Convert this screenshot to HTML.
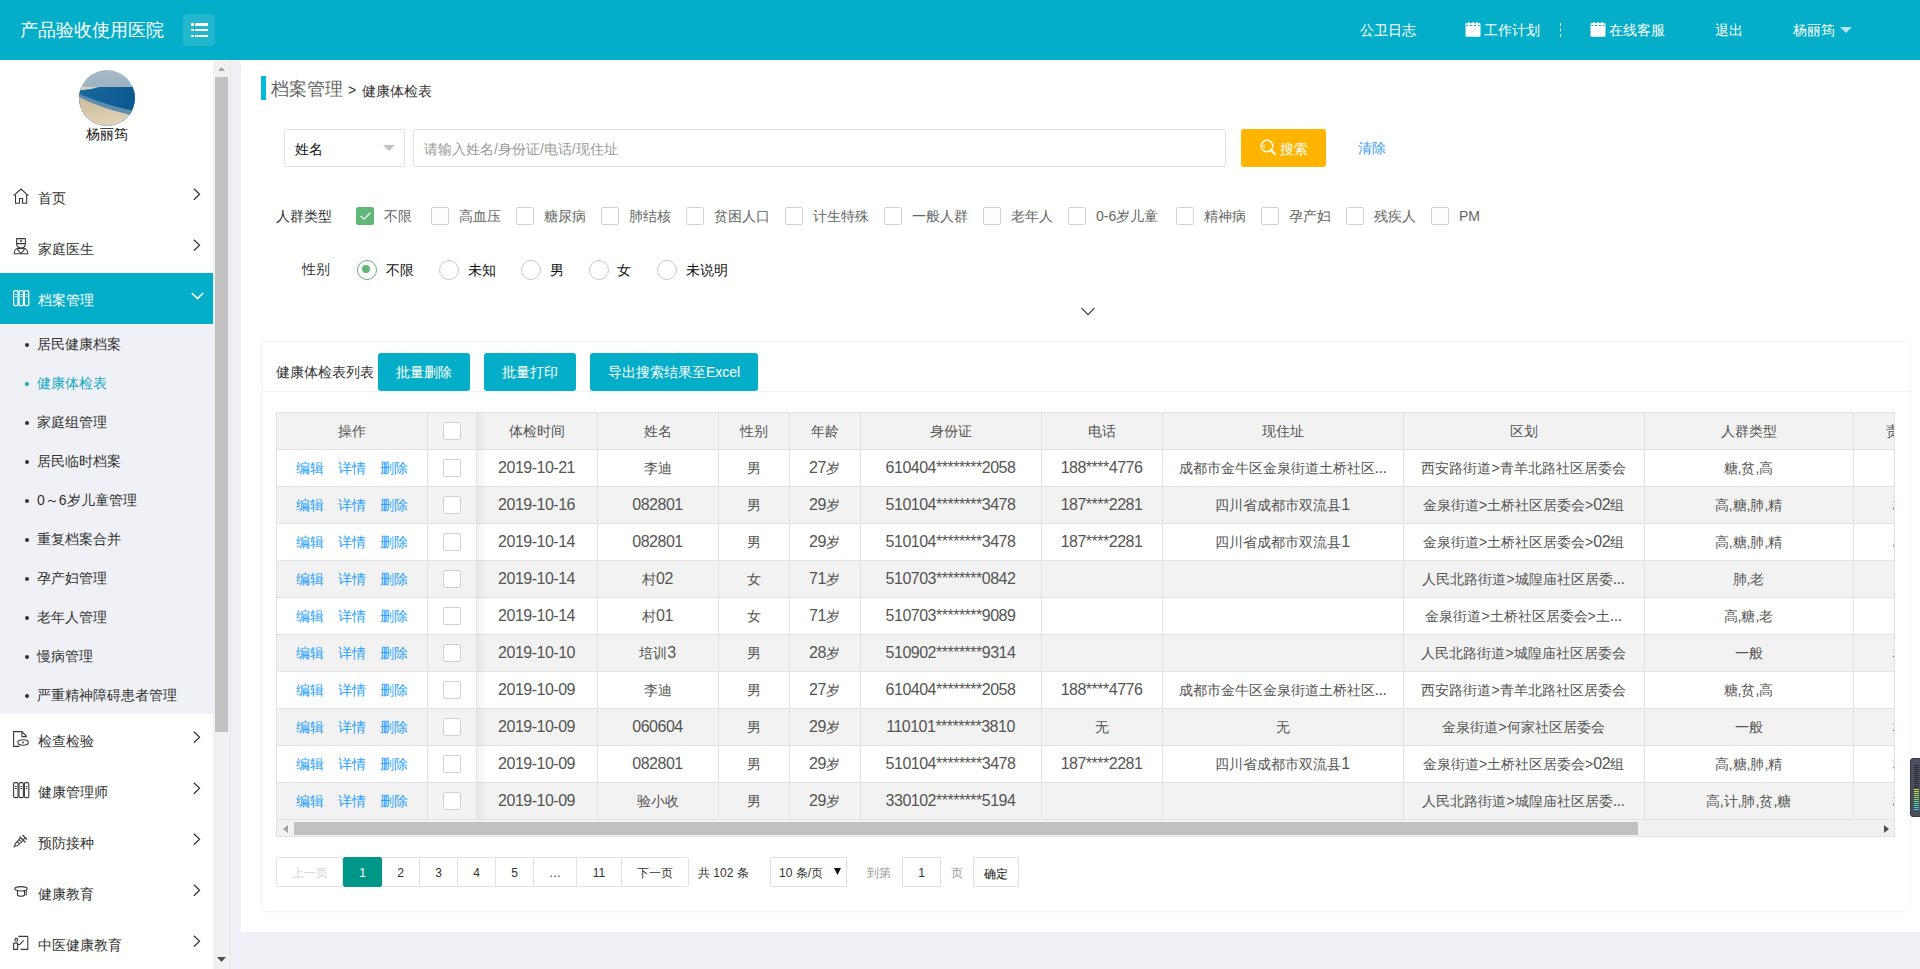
<!DOCTYPE html>
<html lang="zh">
<head>
<meta charset="utf-8">
<title>健康体检表</title>
<style>
*{box-sizing:border-box;margin:0;padding:0}
html,body{width:1920px;height:969px;overflow:hidden;background:#f0f1f6;font-family:"Liberation Sans",sans-serif;font-size:14px;color:#333}
.abs{position:absolute;white-space:nowrap}
#header{position:absolute;left:0;top:0;width:1920px;height:60px;background:#05aec8}
.logo{position:absolute;left:20px;top:18px;font-size:18px;line-height:24px;color:#fff;white-space:nowrap}
.menubtn{position:absolute;left:183px;top:14px;width:32px;height:32px;border-radius:4px;background:rgba(255,255,255,.12)}
.menubtn i{position:absolute;height:2.4px;background:#fff}
.nav{position:absolute;top:20px;line-height:20px;color:#fff;font-size:14px;white-space:nowrap}
/* sidebar */
#side{position:absolute;left:0;top:60px;width:213px;height:909px;background:#fff;overflow:hidden}
.avatar{position:absolute;left:79px;top:10px;width:56px;height:56px;border-radius:50%;overflow:hidden}
.uname{position:absolute;left:0;width:213px;top:65px;text-align:center;line-height:18px;font-size:14px;color:#111}
.mi{position:absolute;left:0;width:213px;height:51px}
.mi .t{position:absolute;left:38px;top:17px;line-height:20px;color:#333;white-space:nowrap}
.mi svg.ic{position:absolute;left:13px;top:17px}
.mi svg.ch{position:absolute;left:192px;top:17px}
.mi.active{background:#05aec8}
.mi.active .t{color:#fff}
.sub{position:absolute;left:0;top:264px;width:213px;height:390px;background:#f0f1f6}
.si{position:absolute;left:0;width:213px;height:39px}
.si .t{position:absolute;left:37px;top:10px;line-height:20px;color:#333;white-space:nowrap}
.si b{position:absolute;left:25px;top:19px;width:4px;height:4px;border-radius:50%;background:#333}
.si.cur .t{color:#13a9c5}
.si.cur b{background:#13a9c5}
/* sidebar scrollbar */
#vsb{position:absolute;left:213px;top:60px;width:17px;height:909px;background:#f1f1f1}
#vsb .thumb{position:absolute;left:2px;top:17px;width:13px;height:655px;background:#c1c1c1}
#vsbline{position:absolute;left:230px;top:60px;width:1px;height:909px;background:#e6e6e6}
/* main */
#main{position:absolute;left:241px;top:60px;width:1679px;height:872px;background:#fff}
.card{position:absolute;left:261px;top:341px;width:1650px;height:571px;border:1px solid #f5f5f5;border-radius:4px;background:#fff;box-shadow:0 1px 1px rgba(0,0,0,.02)}
.cardline{position:absolute;left:262px;top:391px;width:1648px;height:1px;background:#f2f2f2}
.chk{position:absolute;width:18px;height:18px;border:1px solid #d2d2d2;border-radius:2px;background:#fff}
.chk.on{background:#5fb878;border-color:#5fb878}
.clbl{position:absolute;line-height:20px;margin-top:1px;color:#666;white-space:nowrap}
.radio{position:absolute;width:20px;height:20px;border:1.8px solid #c9c9c9;border-radius:50%}
.radio.on{border-color:#5fb878}
.radio.on:after{content:"";position:absolute;left:4.2px;top:4.2px;width:8px;height:8px;border-radius:50%;background:#5fb878}
.rlbl{position:absolute;line-height:20px;color:#111;white-space:nowrap;margin-top:1px}
.btn{position:absolute;height:38px;border-radius:3px;background:#05aec8;color:#fff;text-align:center;line-height:39px;font-size:14px;white-space:nowrap}
/* table */
.tbox{position:absolute;left:276px;top:412px;width:1619px;height:425px;border:1px solid #e2e2e2;overflow:hidden}
.trow{position:absolute;left:277px;width:1617px}
.trow.hd{background:#f2f2f2}
.trow.odd{background:#fff}
.trow.even{background:#f2f2f2}
.hl{position:absolute;left:277px;width:1617px;height:1px;background:#e2e2e2}
.d{font-size:16px;letter-spacing:-0.5px}
.cell{position:absolute;height:36px;line-height:36px;text-align:center;color:#555;white-space:nowrap;overflow:hidden}
.cell.th{color:#555}
.vl{position:absolute;width:1px;background:#e2e2e2}
.cb{position:absolute;width:18px;height:18px;border:1px solid #d2d2d2;border-radius:2px;background:#fff}
.ops span{position:absolute;line-height:36px;color:#1e9fff;white-space:nowrap}
.ops{position:absolute;left:0;height:37px}
.shadow{position:absolute;width:10px;background:linear-gradient(to right,rgba(0,0,0,.05),rgba(0,0,0,0))}
#hsb{position:absolute;left:277px;top:820px;width:1617px;height:16px;background:#f1f1f1}
#hsb .thumb{position:absolute;left:17px;top:2px;width:1344px;height:13px;background:#c1c1c1}
/* pagination */
.pg{position:absolute;top:857px;height:30px;border:1px solid #e2e2e2;line-height:30px;text-align:center;font-size:12px;color:#333;background:#fff;white-space:nowrap}
.pgt{position:absolute;top:863px;line-height:20px;font-size:12px;color:#333;white-space:nowrap}
</style>
</head>
<body>
<div id="header">
  <div class="logo">产品验收使用医院</div>
  <div class="menubtn">
    <i style="left:8px;top:9.2px;width:3px"></i><i style="left:12px;top:9.2px;width:13px"></i>
    <i style="left:8px;top:15px;width:3px"></i><i style="left:12px;top:15px;width:13px"></i>
    <i style="left:8px;top:20.8px;width:3px"></i><i style="left:12px;top:20.8px;width:13px"></i>
  </div>
  <div class="nav" style="left:1360px">公卫日志</div>
  <svg class="abs" style="left:1465px;top:22px" width="16" height="16" viewBox="0 0 16 16"><rect x="0.5" y="1" width="15" height="13.8" rx="1" fill="#fff"/><circle cx="4" cy="1" r="0.9" fill="#fff"/><circle cx="8" cy="1" r="0.9" fill="#fff"/><circle cx="12" cy="1" r="0.9" fill="#fff"/><path d="M1.3 3.5H3.2M4.8 3.5H7.2M8.8 3.5H11.2M12.8 3.5H14.5" stroke="#05aec8" stroke-width="1.1"/><path d="M5 8.6l1.8 1.8 3.2-3.4" stroke="#a9dfe9" stroke-width="0.8" fill="none"/></svg>
  <div class="nav" style="left:1484px">工作计划</div>
  <div class="abs" style="left:1560px;top:23px;width:1px;height:14px;border-left:1px dashed #fff"></div>
  <svg class="abs" style="left:1590px;top:22px" width="16" height="16" viewBox="0 0 16 16"><rect x="0.5" y="1" width="15" height="13.8" rx="1" fill="#fff"/><circle cx="4" cy="1" r="0.9" fill="#fff"/><circle cx="8" cy="1" r="0.9" fill="#fff"/><circle cx="12" cy="1" r="0.9" fill="#fff"/><path d="M1.3 3.5H3.2M4.8 3.5H7.2M8.8 3.5H11.2M12.8 3.5H14.5" stroke="#05aec8" stroke-width="1.1"/><path d="M5 8.6l1.8 1.8 3.2-3.4" stroke="#a9dfe9" stroke-width="0.8" fill="none"/></svg>
  <div class="nav" style="left:1609px">在线客服</div>
  <div class="nav" style="left:1715px">退出</div>
  <div class="nav" style="left:1793px">杨丽筠</div>
  <svg class="abs" style="left:1840px;top:27px" width="12" height="6" viewBox="0 0 12 6"><path d="M0 0h12L6 6z" fill="#b5e6ee"/></svg>
</div>

<div id="side">
  <div class="avatar">
    <svg width="56" height="56" viewBox="0 0 56 56">
      <defs><linearGradient id="sky" x1="0" y1="0" x2="0" y2="1"><stop offset="0" stop-color="#a6bac8"/><stop offset="1" stop-color="#8ba4b6"/></linearGradient>
      <linearGradient id="sea" x1="0" y1="0" x2="1" y2="0.3"><stop offset="0" stop-color="#1a6a9e"/><stop offset="1" stop-color="#0b5890"/></linearGradient>
      <linearGradient id="sand" x1="0" y1="0" x2="0.3" y2="1"><stop offset="0" stop-color="#cdbb9b"/><stop offset="1" stop-color="#e0d2b8"/></linearGradient></defs>
      <rect width="56" height="56" fill="url(#sky)"/>
      <rect y="17" width="56" height="39" fill="url(#sea)"/>
      <path d="M0 16.5 L20 17.3 L12 19 L0 20.5 Z" fill="#d9d0c0"/>
      <path d="M0 24 C16 30 34 37 56 41 L56 47 C34 43 16 36 0 27.5 Z" fill="#5c8cae"/>
      <path d="M0 27 C16 35 34 41 56 46 L56 56 L0 56 Z" fill="url(#sand)"/>
    </svg>
  </div>
  <div class="uname">杨丽筠</div>

  <div class="mi" style="top:111px">
    <svg class="ic" style="top:17px" width="17" height="17" viewBox="0 0 17 17" fill="none" stroke="#3a3a3a" stroke-width="1.1"><path d="M0.6 7.6 L8 1 L15.4 7.6 M2.5 7 V15.2 H6.5 V10.5 H9.6 V15.2 H13.6 V7"/></svg>
    <div class="t">首页</div>
    <svg class="ch" width="9" height="13" viewBox="0 0 9 13"><path d="M1.8 0.8 L7.6 6.3 L1.8 11.8" fill="none" stroke="#333" stroke-width="1.2"/></svg>
  </div>
  <div class="mi" style="top:162px">
    <svg class="ic" style="top:16px" width="17" height="17" viewBox="0 0 17 17" fill="none" stroke="#3a3a3a" stroke-width="1.1"><path d="M3.6 5.6 V1 Q3.6 0.6 4.2 0.6 H11.8 Q12.4 0.6 12.4 1 V5.6 Z M3.6 5.6 C3.6 8.6 5.6 10 8 10 C10.4 10 12.4 8.6 12.4 5.6 M1.2 15.8 C1.2 12.2 3.2 10.4 5 10.4 H11 C12.8 10.4 14.8 12.2 14.8 15.8 Z M4.6 10.6 C4.8 13.2 8 15.2 8 15.2 C8 15.2 11.2 13.2 11.4 10.6 M8 1.8 V4.2 M6.9 3 H9.1"/></svg>
    <div class="t">家庭医生</div>
    <svg class="ch" width="9" height="13" viewBox="0 0 9 13"><path d="M1.8 0.8 L7.6 6.3 L1.8 11.8" fill="none" stroke="#333" stroke-width="1.2"/></svg>
  </div>
  <div class="mi active" style="top:213px">
    <svg class="ic" width="17" height="17" viewBox="0 0 17 17" fill="none" stroke="#fff" stroke-width="1.2"><rect x="0.6" y="0.6" width="4.4" height="15" rx="1.4"/><rect x="6" y="0.6" width="4.4" height="15" rx="1.4"/><rect x="11.4" y="0.6" width="4.4" height="15" rx="1.4"/><path d="M2 4.5H3.6M2 6.5H3.6M7.4 4.5H9M7.4 6.5H9M12.8 4.5H14.4M12.8 6.5H14.4"/></svg>
    <div class="t">档案管理</div>
    <svg class="ch" style="left:190px;top:19px" width="15" height="9" viewBox="0 0 15 9"><path d="M1.8 1 L7.5 6.6 L13.2 1" fill="none" stroke="#fff" stroke-width="1.7"/></svg>
  </div>
  <div class="sub">
    <div class="si" style="top:0"><b></b><div class="t">居民健康档案</div></div>
    <div class="si cur" style="top:39px"><b></b><div class="t">健康体检表</div></div>
    <div class="si" style="top:78px"><b></b><div class="t">家庭组管理</div></div>
    <div class="si" style="top:117px"><b></b><div class="t">居民临时档案</div></div>
    <div class="si" style="top:156px"><b></b><div class="t">0～6岁儿童管理</div></div>
    <div class="si" style="top:195px"><b></b><div class="t">重复档案合并</div></div>
    <div class="si" style="top:234px"><b></b><div class="t">孕产妇管理</div></div>
    <div class="si" style="top:273px"><b></b><div class="t">老年人管理</div></div>
    <div class="si" style="top:312px"><b></b><div class="t">慢病管理</div></div>
    <div class="si" style="top:351px"><b></b><div class="t">严重精神障碍患者管理</div></div>
  </div>
  <div class="mi" style="top:654px">
    <svg class="ic" style="top:17px" width="17" height="17" viewBox="0 0 17 17" fill="none" stroke="#3a3a3a" stroke-width="1.1"><path d="M6.6 15.4 H0.6 V0.6 H8.9 L13.3 5 V6.4 M8.9 0.6 V5.6 H12.6"/><ellipse cx="10.1" cy="11.5" rx="5.2" ry="2.7"/><circle cx="10.1" cy="11.5" r="0.9" fill="#3a3a3a" stroke="none"/></svg>
    <div class="t">检查检验</div>
    <svg class="ch" width="9" height="13" viewBox="0 0 9 13"><path d="M1.8 0.8 L7.6 6.3 L1.8 11.8" fill="none" stroke="#333" stroke-width="1.2"/></svg>
  </div>
  <div class="mi" style="top:705px">
    <svg class="ic" width="17" height="17" viewBox="0 0 17 17" fill="none" stroke="#3a3a3a" stroke-width="1.1"><rect x="0.6" y="0.6" width="4.4" height="15" rx="1.4"/><rect x="6" y="0.6" width="4.4" height="15" rx="1.4"/><rect x="11.4" y="0.6" width="4.4" height="15" rx="1.4"/><path d="M2 4.5H3.6M2 6.5H3.6M7.4 4.5H9M7.4 6.5H9M12.8 4.5H14.4M12.8 6.5H14.4"/></svg>
    <div class="t">健康管理师</div>
    <svg class="ch" width="9" height="13" viewBox="0 0 9 13"><path d="M1.8 0.8 L7.6 6.3 L1.8 11.8" fill="none" stroke="#333" stroke-width="1.2"/></svg>
  </div>
  <div class="mi" style="top:756px">
    <svg class="ic" style="top:17px" width="17" height="17" viewBox="0 0 17 17" fill="none" stroke="#3a3a3a" stroke-width="1.1"><path d="M6.5 3.5 L12.5 9.5 M9.5 2 L14 6.5 M10.5 6.5 L11.8 5.2 M7.6 4.7 L2.2 10.8 L1.8 13.2 L4.2 12.8 L10.3 7.4 M2.2 12.8 L0.6 14.4 M4.6 8.8 L5.9 10.1 M6.3 7 L7.6 8.3"/></svg>
    <div class="t">预防接种</div>
    <svg class="ch" width="9" height="13" viewBox="0 0 9 13"><path d="M1.8 0.8 L7.6 6.3 L1.8 11.8" fill="none" stroke="#333" stroke-width="1.2"/></svg>
  </div>
  <div class="mi" style="top:807px">
    <svg class="ic" style="top:17px" width="17" height="17" viewBox="0 0 17 17" fill="none" stroke="#3a3a3a" stroke-width="1.1"><path d="M8 2.6 C12 2.6 14.2 3.6 14.2 4.8 C14.2 6 12 7 8 7 C4 7 1.8 6 1.8 4.8 C1.8 3.6 4 2.6 8 2.6 Z M4.5 6.6 V11.2 Q8 13.4 11.5 11.2 V6.6 M13.2 6 V11.5"/></svg>
    <div class="t">健康教育</div>
    <svg class="ch" width="9" height="13" viewBox="0 0 9 13"><path d="M1.8 0.8 L7.6 6.3 L1.8 11.8" fill="none" stroke="#333" stroke-width="1.2"/></svg>
  </div>
  <div class="mi" style="top:858px">
    <svg class="ic" style="top:17px" width="17" height="17" viewBox="0 0 17 17" fill="none" stroke="#3a3a3a" stroke-width="1.1"><path d="M5.5 1.4 H14.2 Q14.8 1.4 14.8 2 V14.4 H7.6 M0.6 14.4 V8.6 Q0.6 8.1 1.1 8.1 H4.6 V14.4 Z M4.6 9.6 L6.8 9.4 L10.6 5.4"/><circle cx="3.3" cy="4.8" r="1.4"/></svg>
    <div class="t">中医健康教育</div>
    <svg class="ch" width="9" height="13" viewBox="0 0 9 13"><path d="M1.8 0.8 L7.6 6.3 L1.8 11.8" fill="none" stroke="#333" stroke-width="1.2"/></svg>
  </div>
</div>
<div id="vsb">
  <svg style="position:absolute;left:5px;top:7px" width="7" height="4" viewBox="0 0 7 4"><path d="M0 4 L3.5 0 L7 4Z" fill="#a3a3a3"/></svg>
  <div class="thumb"></div>
  <svg style="position:absolute;left:4px;top:897px" width="9" height="5" viewBox="0 0 9 5"><path d="M0 0 L4.5 5 L9 0Z" fill="#505050"/></svg>
</div>
<div id="vsbline"></div>

<div id="main"></div>
<!-- breadcrumb -->
<div class="abs" style="left:261px;top:76px;width:5px;height:24px;background:#00bcd9"></div>
<div class="abs" style="left:271px;top:77px;font-size:18px;line-height:24px;color:#666">档案管理</div>
<div class="abs" style="left:348px;top:80px;font-size:14px;line-height:20px;color:#333">&gt;</div>
<div class="abs" style="left:362px;top:81px;font-size:14px;line-height:20px;color:#333">健康体检表</div>

<!-- search row -->
<div class="abs" style="left:284px;top:129px;width:121px;height:38px;border:1px solid #e2e2e2;border-radius:2px;background:#fff"></div>
<div class="abs" style="left:295px;top:139px;line-height:20px;color:#111">姓名</div>
<svg class="abs" style="left:383px;top:145px" width="12" height="6" viewBox="0 0 12 6"><path d="M0 0h12L6 6z" fill="#c2c2c2"/></svg>
<div class="abs" style="left:413px;top:129px;width:813px;height:38px;border:1px solid #e2e2e2;border-radius:2px;background:#fff"></div>
<div class="abs" style="left:424px;top:139px;line-height:20px;color:#999">请输入姓名/身份证/电话/现住址</div>
<div class="btn" style="left:1241px;top:129px;width:85px;background:#ffb400"></div>
<svg class="abs" style="left:1260px;top:139px" width="17" height="17" viewBox="0 0 17 17"><circle cx="7" cy="7" r="5.8" fill="none" stroke="#fff" stroke-width="1.4"/><path d="M11 11 L15 15" stroke="#fff" stroke-width="2" stroke-linecap="round"/><path d="M4.5 5 A3 3 0 0 0 4.5 9" fill="none" stroke="#fff" stroke-width="1"/></svg>
<div class="abs" style="left:1280px;top:139px;line-height:20px;color:#fff">搜索</div>
<div class="abs" style="left:1358px;top:138px;line-height:20px;color:#3c9cf0">清除</div>

<!-- checkbox row -->
<div class="abs" style="left:276px;top:206px;line-height:20px;color:#333">人群类型</div>
<div class="chk on" style="left:356px;top:207px"><svg style="position:absolute;left:2px;top:3px" width="13" height="10" viewBox="0 0 13 10"><path d="M1.5 5 L5 8 L11.5 1.8" fill="none" stroke="#fff" stroke-width="1.2"/></svg></div>
<div class="clbl" style="left:384px;top:205px">不限</div>
<div class="chk" style="left:431px;top:207px"></div><div class="clbl" style="left:459px;top:205px">高血压</div>
<div class="chk" style="left:516px;top:207px"></div><div class="clbl" style="left:544px;top:205px">糖尿病</div>
<div class="chk" style="left:601px;top:207px"></div><div class="clbl" style="left:629px;top:205px">肺结核</div>
<div class="chk" style="left:686px;top:207px"></div><div class="clbl" style="left:714px;top:205px">贫困人口</div>
<div class="chk" style="left:785px;top:207px"></div><div class="clbl" style="left:813px;top:205px">计生特殊</div>
<div class="chk" style="left:884px;top:207px"></div><div class="clbl" style="left:912px;top:205px">一般人群</div>
<div class="chk" style="left:983px;top:207px"></div><div class="clbl" style="left:1011px;top:205px">老年人</div>
<div class="chk" style="left:1068px;top:207px"></div><div class="clbl" style="left:1096px;top:205px">0-6岁儿童</div>
<div class="chk" style="left:1176px;top:207px"></div><div class="clbl" style="left:1204px;top:205px">精神病</div>
<div class="chk" style="left:1261px;top:207px"></div><div class="clbl" style="left:1289px;top:205px">孕产妇</div>
<div class="chk" style="left:1346px;top:207px"></div><div class="clbl" style="left:1374px;top:205px">残疾人</div>
<div class="chk" style="left:1431px;top:207px"></div><div class="clbl" style="left:1459px;top:205px">PM</div>

<!-- radio row -->
<div class="abs" style="left:302px;top:259px;line-height:20px;color:#333">性别</div>
<div class="radio on" style="left:357px;top:260px"></div><div class="rlbl" style="left:386px;top:259px">不限</div>
<div class="radio" style="left:439px;top:260px"></div><div class="rlbl" style="left:468px;top:259px">未知</div>
<div class="radio" style="left:521px;top:260px"></div><div class="rlbl" style="left:550px;top:259px">男</div>
<div class="radio" style="left:589px;top:260px"></div><div class="rlbl" style="left:617px;top:259px">女</div>
<div class="radio" style="left:657px;top:260px"></div><div class="rlbl" style="left:686px;top:259px">未说明</div>

<svg class="abs" style="left:1081px;top:307px" width="15" height="9" viewBox="0 0 15 9"><path d="M0.6 1.2 L7 7.6 L13.4 1.2" fill="none" stroke="#333" stroke-width="1.15"/></svg>

<!-- card -->
<div class="card"></div>
<div class="cardline"></div>
<div class="abs" style="left:276px;top:362px;line-height:20px;color:#333">健康体检表列表</div>
<div class="btn" style="left:378px;top:353px;width:92px">批量删除</div>
<div class="btn" style="left:484px;top:353px;width:92px">批量打印</div>
<div class="btn" style="left:590px;top:353px;width:168px">导出搜索结果至Excel</div>

<!-- table -->
<div class="tbox"></div>
<div style="position:absolute;left:0;top:0;width:1894px;height:969px;overflow:hidden">
<div class="trow hd" style="top:413px;height:36px"></div>
<div class="cell th" style="left:276px;width:151px;top:413px">操作</div>
<div class="cb" style="left:443px;top:422px"></div>
<div class="cell th" style="left:476px;width:121px;top:413px">体检时间</div>
<div class="cell th" style="left:597px;width:121px;top:413px">姓名</div>
<div class="cell th" style="left:718px;width:71px;top:413px">性别</div>
<div class="cell th" style="left:789px;width:71px;top:413px">年龄</div>
<div class="cell th" style="left:860px;width:181px;top:413px">身份证</div>
<div class="cell th" style="left:1041px;width:121px;top:413px">电话</div>
<div class="cell th" style="left:1162px;width:241px;top:413px">现住址</div>
<div class="cell th" style="left:1403px;width:241px;top:413px">区划</div>
<div class="cell th" style="left:1644px;width:209px;top:413px">人群类型</div>
<div class="cell th" style="left:1853px;width:122px;top:413px">责任医生</div>
<div class="hl" style="top:412px"></div>
<div class="hl" style="top:449px"></div>
<div class="hl" style="top:486px"></div>
<div class="hl" style="top:523px"></div>
<div class="hl" style="top:560px"></div>
<div class="hl" style="top:597px"></div>
<div class="hl" style="top:634px"></div>
<div class="hl" style="top:671px"></div>
<div class="hl" style="top:708px"></div>
<div class="hl" style="top:745px"></div>
<div class="hl" style="top:782px"></div>
<div class="hl" style="top:819px"></div>
<div class="trow odd" style="top:450px;height:36px"></div>
<div class="ops" style="top:450px"><span style="left:296px">编辑</span><span style="left:338px">详情</span><span style="left:380px">删除</span></div>
<div class="cb" style="left:443px;top:459px"></div>
<div class="cell" style="left:476px;width:121px;top:450px"><span class="d">2019-10-21</span></div>
<div class="cell" style="left:597px;width:121px;top:450px">李迪</div>
<div class="cell" style="left:718px;width:71px;top:450px">男</div>
<div class="cell" style="left:789px;width:71px;top:450px"><span class="d">27</span>岁</div>
<div class="cell" style="left:860px;width:181px;top:450px"><span class="d">610404********2058</span></div>
<div class="cell" style="left:1041px;width:121px;top:450px"><span class="d">188****4776</span></div>
<div class="cell" style="left:1162px;width:241px;top:450px">成都市金牛区金泉街道土桥社区<span class="d">...</span></div>
<div class="cell" style="left:1403px;width:241px;top:450px">西安路街道>青羊北路社区居委会</div>
<div class="cell" style="left:1644px;width:209px;top:450px">糖,贫,高</div>
<div class="trow even" style="top:487px;height:36px"></div>
<div class="ops" style="top:487px"><span style="left:296px">编辑</span><span style="left:338px">详情</span><span style="left:380px">删除</span></div>
<div class="cb" style="left:443px;top:496px"></div>
<div class="cell" style="left:476px;width:121px;top:487px"><span class="d">2019-10-16</span></div>
<div class="cell" style="left:597px;width:121px;top:487px"><span class="d">082801</span></div>
<div class="cell" style="left:718px;width:71px;top:487px">男</div>
<div class="cell" style="left:789px;width:71px;top:487px"><span class="d">29</span>岁</div>
<div class="cell" style="left:860px;width:181px;top:487px"><span class="d">510104********3478</span></div>
<div class="cell" style="left:1041px;width:121px;top:487px"><span class="d">187****2281</span></div>
<div class="cell" style="left:1162px;width:241px;top:487px">四川省成都市双流县<span class="d">1</span></div>
<div class="cell" style="left:1403px;width:241px;top:487px">金泉街道>土桥社区居委会><span class="d">02</span>组</div>
<div class="cell" style="left:1644px;width:209px;top:487px">高,糖,肺,精</div>
<div class="cell" style="left:1853px;width:122px;top:487px">杨丽筠</div>
<div class="trow odd" style="top:524px;height:36px"></div>
<div class="ops" style="top:524px"><span style="left:296px">编辑</span><span style="left:338px">详情</span><span style="left:380px">删除</span></div>
<div class="cb" style="left:443px;top:533px"></div>
<div class="cell" style="left:476px;width:121px;top:524px"><span class="d">2019-10-14</span></div>
<div class="cell" style="left:597px;width:121px;top:524px"><span class="d">082801</span></div>
<div class="cell" style="left:718px;width:71px;top:524px">男</div>
<div class="cell" style="left:789px;width:71px;top:524px"><span class="d">29</span>岁</div>
<div class="cell" style="left:860px;width:181px;top:524px"><span class="d">510104********3478</span></div>
<div class="cell" style="left:1041px;width:121px;top:524px"><span class="d">187****2281</span></div>
<div class="cell" style="left:1162px;width:241px;top:524px">四川省成都市双流县<span class="d">1</span></div>
<div class="cell" style="left:1403px;width:241px;top:524px">金泉街道>土桥社区居委会><span class="d">02</span>组</div>
<div class="cell" style="left:1644px;width:209px;top:524px">高,糖,肺,精</div>
<div class="cell" style="left:1853px;width:122px;top:524px">杨丽筠</div>
<div class="trow even" style="top:561px;height:36px"></div>
<div class="ops" style="top:561px"><span style="left:296px">编辑</span><span style="left:338px">详情</span><span style="left:380px">删除</span></div>
<div class="cb" style="left:443px;top:570px"></div>
<div class="cell" style="left:476px;width:121px;top:561px"><span class="d">2019-10-14</span></div>
<div class="cell" style="left:597px;width:121px;top:561px">村<span class="d">02</span></div>
<div class="cell" style="left:718px;width:71px;top:561px">女</div>
<div class="cell" style="left:789px;width:71px;top:561px"><span class="d">71</span>岁</div>
<div class="cell" style="left:860px;width:181px;top:561px"><span class="d">510703********0842</span></div>
<div class="cell" style="left:1041px;width:121px;top:561px"></div>
<div class="cell" style="left:1162px;width:241px;top:561px"></div>
<div class="cell" style="left:1403px;width:241px;top:561px">人民北路街道>城隍庙社区居委<span class="d">...</span></div>
<div class="cell" style="left:1644px;width:209px;top:561px">肺,老</div>
<div class="trow odd" style="top:598px;height:36px"></div>
<div class="ops" style="top:598px"><span style="left:296px">编辑</span><span style="left:338px">详情</span><span style="left:380px">删除</span></div>
<div class="cb" style="left:443px;top:607px"></div>
<div class="cell" style="left:476px;width:121px;top:598px"><span class="d">2019-10-14</span></div>
<div class="cell" style="left:597px;width:121px;top:598px">村<span class="d">01</span></div>
<div class="cell" style="left:718px;width:71px;top:598px">女</div>
<div class="cell" style="left:789px;width:71px;top:598px"><span class="d">71</span>岁</div>
<div class="cell" style="left:860px;width:181px;top:598px"><span class="d">510703********9089</span></div>
<div class="cell" style="left:1041px;width:121px;top:598px"></div>
<div class="cell" style="left:1162px;width:241px;top:598px"></div>
<div class="cell" style="left:1403px;width:241px;top:598px">金泉街道>土桥社区居委会>土<span class="d">...</span></div>
<div class="cell" style="left:1644px;width:209px;top:598px">高,糖,老</div>
<div class="trow even" style="top:635px;height:36px"></div>
<div class="ops" style="top:635px"><span style="left:296px">编辑</span><span style="left:338px">详情</span><span style="left:380px">删除</span></div>
<div class="cb" style="left:443px;top:644px"></div>
<div class="cell" style="left:476px;width:121px;top:635px"><span class="d">2019-10-10</span></div>
<div class="cell" style="left:597px;width:121px;top:635px">培训<span class="d">3</span></div>
<div class="cell" style="left:718px;width:71px;top:635px">男</div>
<div class="cell" style="left:789px;width:71px;top:635px"><span class="d">28</span>岁</div>
<div class="cell" style="left:860px;width:181px;top:635px"><span class="d">510902********9314</span></div>
<div class="cell" style="left:1041px;width:121px;top:635px"></div>
<div class="cell" style="left:1162px;width:241px;top:635px"></div>
<div class="cell" style="left:1403px;width:241px;top:635px">人民北路街道>城隍庙社区居委会</div>
<div class="cell" style="left:1644px;width:209px;top:635px">一般</div>
<div class="cell" style="left:1853px;width:122px;top:635px">杨丽筠</div>
<div class="trow odd" style="top:672px;height:36px"></div>
<div class="ops" style="top:672px"><span style="left:296px">编辑</span><span style="left:338px">详情</span><span style="left:380px">删除</span></div>
<div class="cb" style="left:443px;top:681px"></div>
<div class="cell" style="left:476px;width:121px;top:672px"><span class="d">2019-10-09</span></div>
<div class="cell" style="left:597px;width:121px;top:672px">李迪</div>
<div class="cell" style="left:718px;width:71px;top:672px">男</div>
<div class="cell" style="left:789px;width:71px;top:672px"><span class="d">27</span>岁</div>
<div class="cell" style="left:860px;width:181px;top:672px"><span class="d">610404********2058</span></div>
<div class="cell" style="left:1041px;width:121px;top:672px"><span class="d">188****4776</span></div>
<div class="cell" style="left:1162px;width:241px;top:672px">成都市金牛区金泉街道土桥社区<span class="d">...</span></div>
<div class="cell" style="left:1403px;width:241px;top:672px">西安路街道>青羊北路社区居委会</div>
<div class="cell" style="left:1644px;width:209px;top:672px">糖,贫,高</div>
<div class="trow even" style="top:709px;height:36px"></div>
<div class="ops" style="top:709px"><span style="left:296px">编辑</span><span style="left:338px">详情</span><span style="left:380px">删除</span></div>
<div class="cb" style="left:443px;top:718px"></div>
<div class="cell" style="left:476px;width:121px;top:709px"><span class="d">2019-10-09</span></div>
<div class="cell" style="left:597px;width:121px;top:709px"><span class="d">060604</span></div>
<div class="cell" style="left:718px;width:71px;top:709px">男</div>
<div class="cell" style="left:789px;width:71px;top:709px"><span class="d">29</span>岁</div>
<div class="cell" style="left:860px;width:181px;top:709px"><span class="d">110101********3810</span></div>
<div class="cell" style="left:1041px;width:121px;top:709px">无</div>
<div class="cell" style="left:1162px;width:241px;top:709px">无</div>
<div class="cell" style="left:1403px;width:241px;top:709px">金泉街道>何家社区居委会</div>
<div class="cell" style="left:1644px;width:209px;top:709px">一般</div>
<div class="cell" style="left:1853px;width:122px;top:709px">杨丽筠</div>
<div class="trow odd" style="top:746px;height:36px"></div>
<div class="ops" style="top:746px"><span style="left:296px">编辑</span><span style="left:338px">详情</span><span style="left:380px">删除</span></div>
<div class="cb" style="left:443px;top:755px"></div>
<div class="cell" style="left:476px;width:121px;top:746px"><span class="d">2019-10-09</span></div>
<div class="cell" style="left:597px;width:121px;top:746px"><span class="d">082801</span></div>
<div class="cell" style="left:718px;width:71px;top:746px">男</div>
<div class="cell" style="left:789px;width:71px;top:746px"><span class="d">29</span>岁</div>
<div class="cell" style="left:860px;width:181px;top:746px"><span class="d">510104********3478</span></div>
<div class="cell" style="left:1041px;width:121px;top:746px"><span class="d">187****2281</span></div>
<div class="cell" style="left:1162px;width:241px;top:746px">四川省成都市双流县<span class="d">1</span></div>
<div class="cell" style="left:1403px;width:241px;top:746px">金泉街道>土桥社区居委会><span class="d">02</span>组</div>
<div class="cell" style="left:1644px;width:209px;top:746px">高,糖,肺,精</div>
<div class="cell" style="left:1853px;width:122px;top:746px">杨丽筠</div>
<div class="trow even" style="top:783px;height:36px"></div>
<div class="ops" style="top:783px"><span style="left:296px">编辑</span><span style="left:338px">详情</span><span style="left:380px">删除</span></div>
<div class="cb" style="left:443px;top:792px"></div>
<div class="cell" style="left:476px;width:121px;top:783px"><span class="d">2019-10-09</span></div>
<div class="cell" style="left:597px;width:121px;top:783px">验小收</div>
<div class="cell" style="left:718px;width:71px;top:783px">男</div>
<div class="cell" style="left:789px;width:71px;top:783px"><span class="d">29</span>岁</div>
<div class="cell" style="left:860px;width:181px;top:783px"><span class="d">330102********5194</span></div>
<div class="cell" style="left:1041px;width:121px;top:783px"></div>
<div class="cell" style="left:1162px;width:241px;top:783px"></div>
<div class="cell" style="left:1403px;width:241px;top:783px">人民北路街道>城隍庙社区居委<span class="d">...</span></div>
<div class="cell" style="left:1644px;width:209px;top:783px">高,计,肺,贫,糖</div>
<div class="cell" style="left:1853px;width:122px;top:783px">杨丽筠</div>
<div class="vl" style="left:427px;top:412px;height:407px"></div>
<div class="vl" style="left:476px;top:412px;height:407px"></div>
<div class="vl" style="left:597px;top:412px;height:407px"></div>
<div class="vl" style="left:718px;top:412px;height:407px"></div>
<div class="vl" style="left:789px;top:412px;height:407px"></div>
<div class="vl" style="left:860px;top:412px;height:407px"></div>
<div class="vl" style="left:1041px;top:412px;height:407px"></div>
<div class="vl" style="left:1162px;top:412px;height:407px"></div>
<div class="vl" style="left:1403px;top:412px;height:407px"></div>
<div class="vl" style="left:1644px;top:412px;height:407px"></div>
<div class="vl" style="left:1853px;top:412px;height:407px"></div>
<div class="shadow" style="left:477px;top:413px;height:406px"></div>
</div>
<div id="hsb">
  <svg style="position:absolute;left:6px;top:5px" width="5" height="8" viewBox="0 0 5 8"><path d="M5 0 L0 4 L5 8Z" fill="#a3a3a3"/></svg>
  <div class="thumb"></div>
  <svg style="position:absolute;left:1607px;top:5px" width="5" height="8" viewBox="0 0 5 8"><path d="M0 0 L5 4 L0 8Z" fill="#505050"/></svg>
</div>

<!-- pagination -->
<div class="pg" style="left:276px;width:67px;color:#d2d2d2;border-radius:2px 0 0 2px">上一页</div>
<div class="pg" style="left:343px;width:39px;background:#009688;border-color:#009688;color:#fff;border-radius:2px">1</div>
<div class="pg" style="left:382px;width:38px;border-left:none">2</div>
<div class="pg" style="left:420px;width:38px;border-left:none">3</div>
<div class="pg" style="left:458px;width:38px;border-left:none">4</div>
<div class="pg" style="left:496px;width:38px;border-left:none">5</div>
<div class="pg" style="left:534px;width:43px;border-left:none">…</div>
<div class="pg" style="left:577px;width:45px;border-left:none">11</div>
<div class="pg" style="left:622px;width:67px;border-left:none;border-radius:0 2px 2px 0">下一页</div>
<div class="pgt" style="left:698px">共 102 条</div>
<div class="pg" style="left:770px;width:77px;text-align:left;padding-left:8px">10 条/页</div>
<svg class="abs" style="left:834px;top:868px" width="7" height="7" viewBox="0 0 7 7"><path d="M0 0h7L3.5 7z" fill="#111"/></svg>
<div class="pgt" style="left:867px;color:#999">到第</div>
<div class="pg" style="left:902px;width:39px">1</div>
<div class="pgt" style="left:951px;color:#999">页</div>
<div class="pg" style="left:973px;width:46px;color:#111;line-height:32px">确定</div>

<!-- floating widget -->
<div class="abs" style="left:1910px;top:758px;width:12px;height:59px;background:#4b505c;border:1px solid #363a44;border-radius:3px 0 0 3px"><i style="position:absolute;left:3px;top:6px;width:5px;height:1px;background:#2b2e36"></i><i style="position:absolute;left:3px;top:8px;width:5px;height:1px;background:#2b2e36"></i><i style="position:absolute;left:3px;top:10px;width:5px;height:1px;background:#2b2e36"></i><i style="position:absolute;left:3px;top:12px;width:5px;height:1px;background:#2b2e36"></i><i style="position:absolute;left:3px;top:14px;width:5px;height:1px;background:#2b2e36"></i><i style="position:absolute;left:3px;top:16px;width:5px;height:1px;background:#2b2e36"></i><i style="position:absolute;left:3px;top:18px;width:5px;height:1px;background:#2b2e36"></i><i style="position:absolute;left:3px;top:20px;width:5px;height:1px;background:#2b2e36"></i><i style="position:absolute;left:3px;top:22px;width:5px;height:1px;background:#2b2e36"></i><i style="position:absolute;left:3px;top:24px;width:5px;height:1px;background:#2b2e36"></i><i style="position:absolute;left:3px;top:26px;width:5px;height:1px;background:#2b2e36"></i><i style="position:absolute;left:3px;top:28px;width:5px;height:1px;background:#2b2e36"></i><i style="position:absolute;left:3px;top:30px;width:5px;height:1px;background:#d3d63a"></i><i style="position:absolute;left:3px;top:32px;width:5px;height:1px;background:#c4d63e"></i><i style="position:absolute;left:3px;top:34px;width:5px;height:1px;background:#b3d94a"></i><i style="position:absolute;left:3px;top:36px;width:5px;height:1px;background:#9fd957"></i><i style="position:absolute;left:3px;top:38px;width:5px;height:1px;background:#8ad865"></i><i style="position:absolute;left:3px;top:40px;width:5px;height:1px;background:#74d673"></i><i style="position:absolute;left:3px;top:42px;width:5px;height:1px;background:#5fd486"></i><i style="position:absolute;left:3px;top:44px;width:5px;height:1px;background:#4ed29a"></i><i style="position:absolute;left:3px;top:46px;width:5px;height:1px;background:#44d0ad"></i><i style="position:absolute;left:3px;top:48px;width:5px;height:1px;background:#3ccdbf"></i><i style="position:absolute;left:3px;top:50px;width:5px;height:1px;background:#38cbc8"></i></div>
</body>
</html>
